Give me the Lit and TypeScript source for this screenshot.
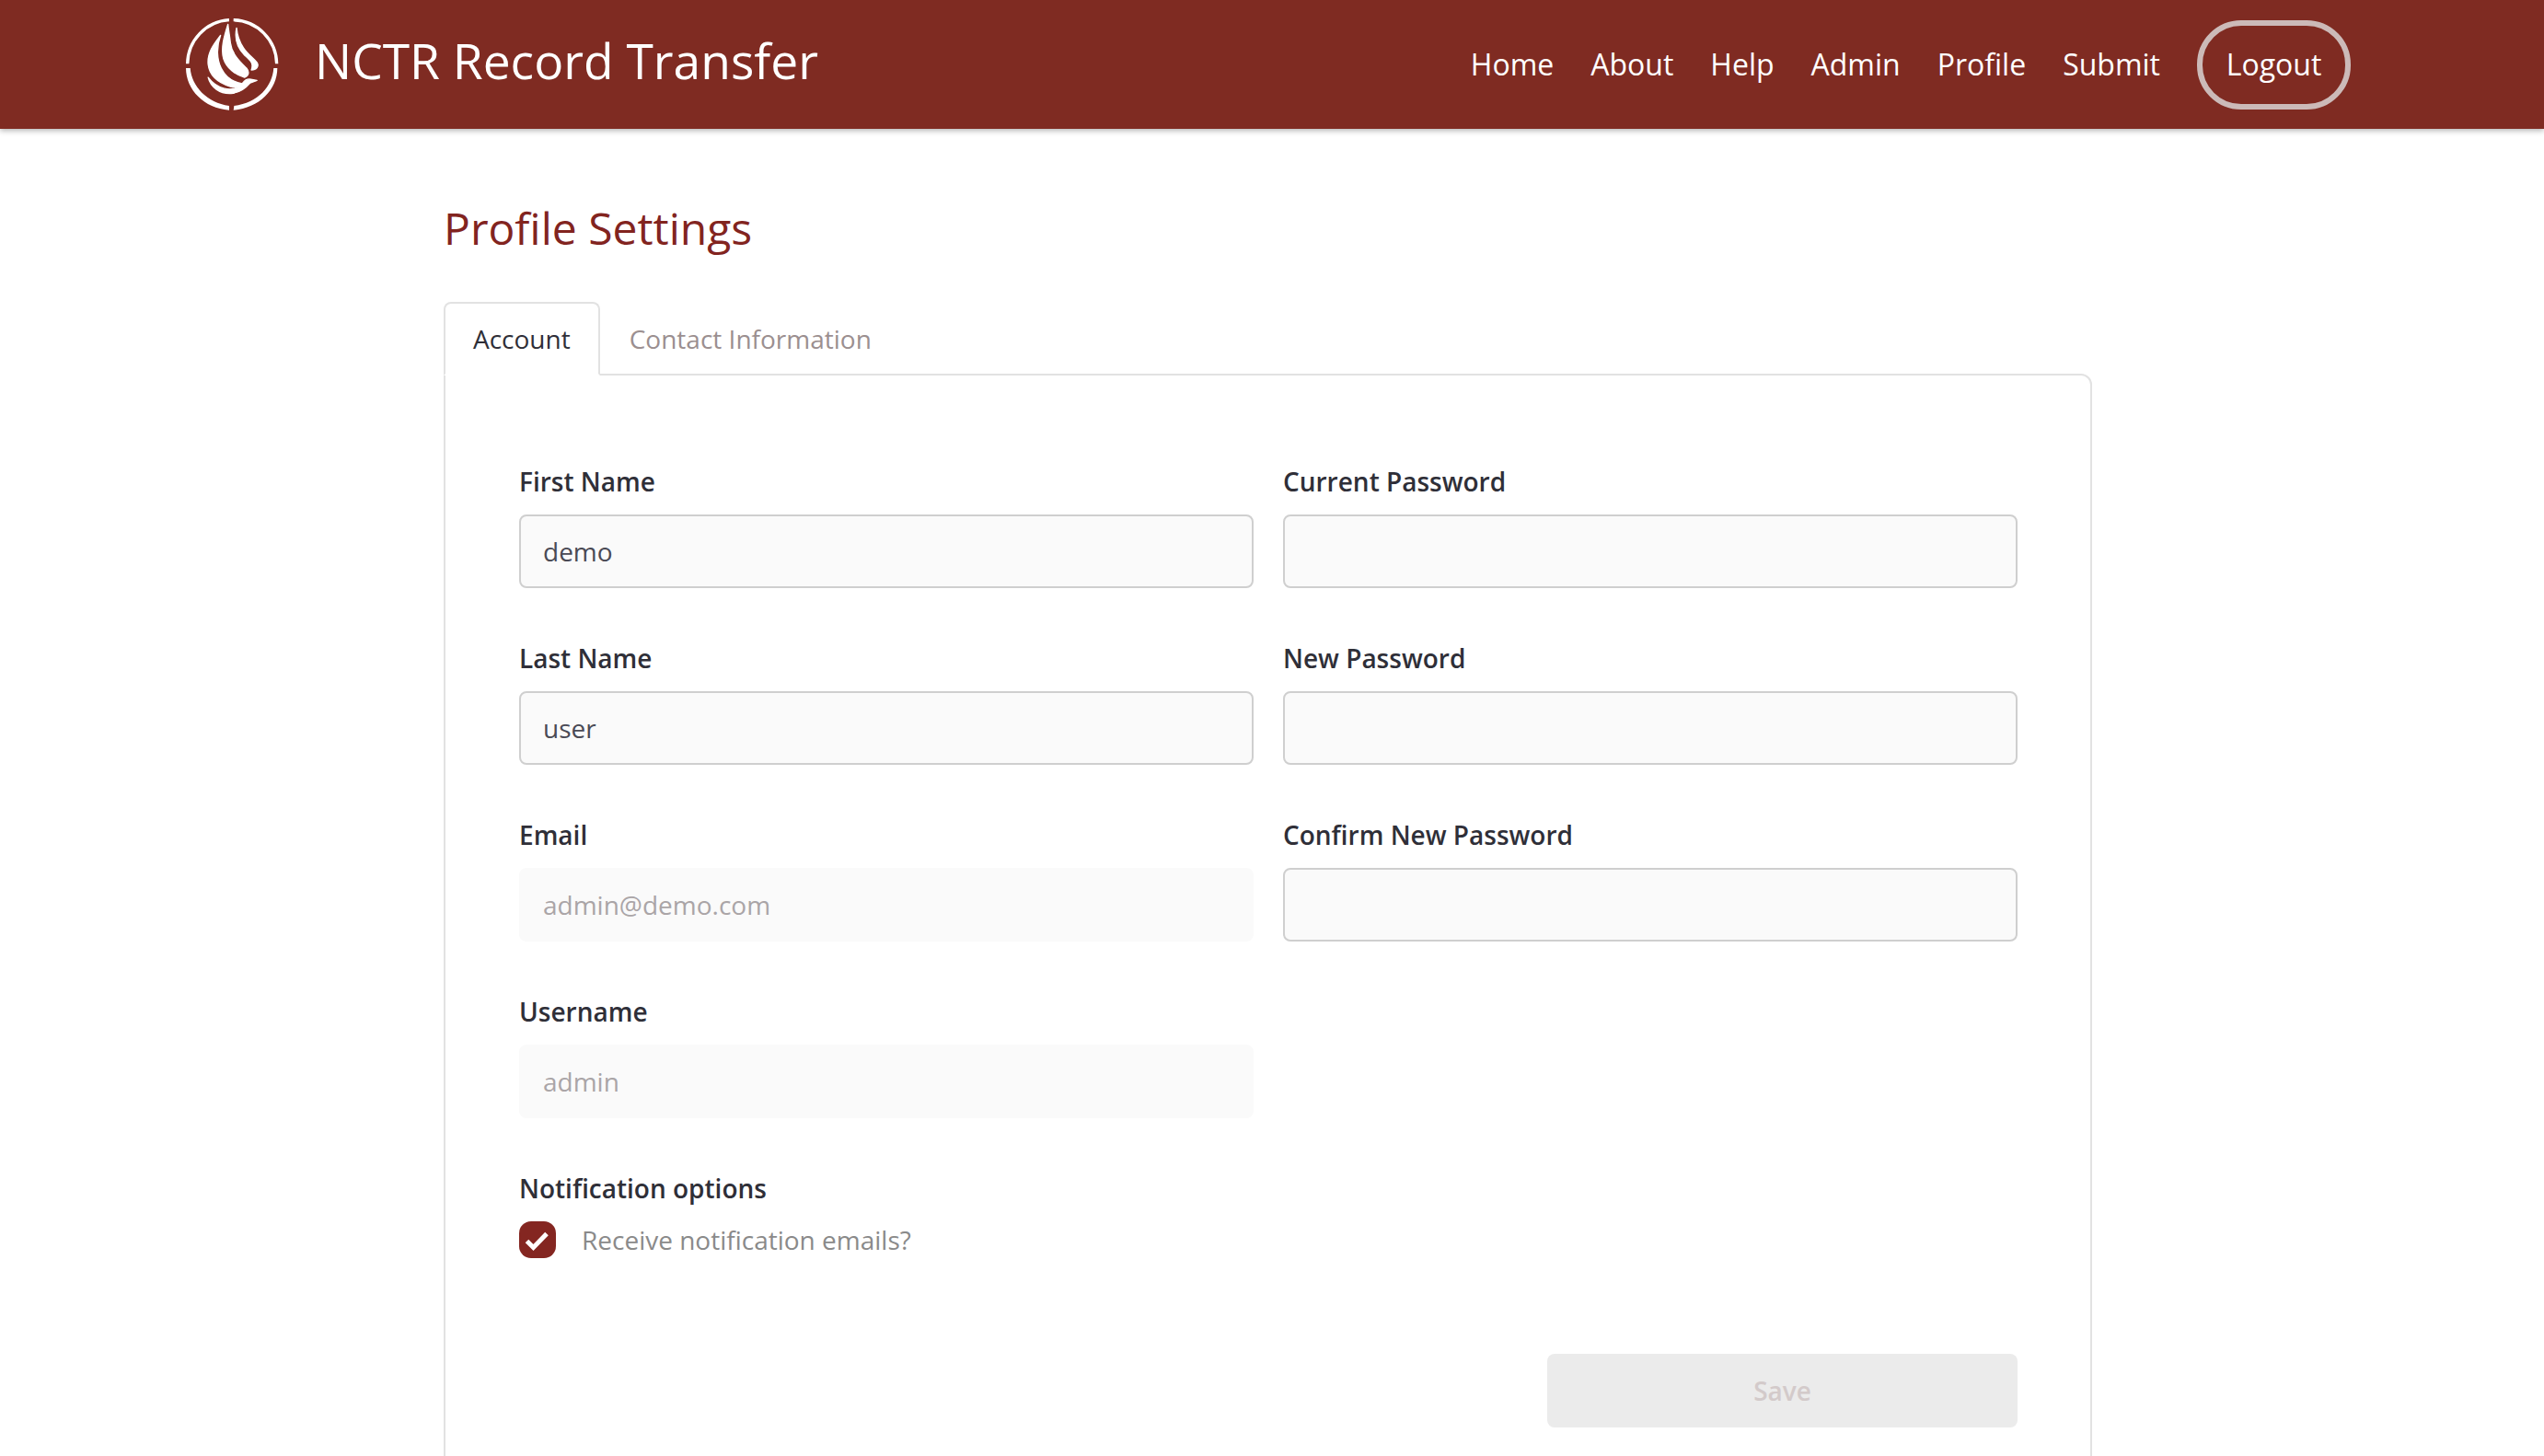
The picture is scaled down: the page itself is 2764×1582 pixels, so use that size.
import { LitElement, html, css, svg } from "lit";
import { customElement } from "lit/decorators.js";

const logoArt = svg`
  <g fill="none" stroke="#fff" stroke-width="10">
    <path d="M41 178 A144 144 0 0 1 176 36" />
    <path d="M190 36 A144 144 0 0 1 330 178" />
  </g>
  <path d="M36 192 L50 192 C54 250 105 305 176 314 L176 328 C95 322 36 262 36 192 Z" />
  <path d="M332 192 L320 192 C316 250 270 305 192 314 L190 328 C272 322 332 262 332 192 Z" />
  <g stroke="#fff" stroke-width="4" stroke-linejoin="round">
    <path d="M148 86 C128 112 104 142 108 180 C112 216 142 240 180 252 C198 256 212 252 224 244 C196 240 166 224 150 192 C136 164 134 124 148 86 Z" />
    <path d="M172 50 C160 88 148 128 158 162 C168 192 196 214 226 222 C240 216 242 204 232 192 C212 172 184 146 180 110 C178 90 174 70 172 50 Z" />
    <path d="M200 62 C192 100 206 130 226 150 C246 168 256 176 248 198 C264 198 274 186 266 174 C254 158 236 148 222 126 C210 108 202 86 200 62 Z" />
    <path d="M108 222 C116 254 146 276 182 274 C212 272 232 254 244 240 L266 232 L246 228 C236 226 226 232 220 240 C206 258 182 264 160 258 C138 252 120 238 108 222 Z" />
  </g>
`;

@customElement("app-root")
export class AppRoot extends LitElement {
  static styles = css`
    :host {
      display: block;
      height: 1582px;
      overflow: hidden;
      background: #fff;
      font-family: "Open Sans", "DejaVu Sans", sans-serif;
      color: #2f2f38;
    }
    .nav {
      height: 140px;
      background: #7f2b22;
      box-shadow: 0 2px 6px rgba(0, 0, 0, 0.3);
      display: flex;
      align-items: center;
      padding: 0 210px 0 200px;
      position: relative;
    }
    .logo { width: 104px; height: 104px; flex: none; }
    .title {
      margin-left: 38px;
      font-size: 53.3px;
      line-height: 1;
      color: #fff;
      flex: 1;
      padding-bottom: 8px;
    }
    .links { display: flex; align-items: center; gap: 40px; }
    .links a { color: #fff; font-size: 32px; text-decoration: none; padding-bottom: 2px; }
    .logout {
      box-sizing: border-box;
      height: 97px;
      width: 167px;
      padding-bottom: 2px;
      display: flex;
      align-items: center;
      justify-content: center;
      border: 6px solid #ccbab8;
      border-radius: 48px;
      color: #fff;
      font-size: 32px;
    }
    main { padding: 0 491px 0 482px; }
    h1 {
      margin: 0;
      padding-top: 74px;
      font-size: 48px;
      line-height: 68px;
      font-weight: 400;
      color: #82241f;
    }
    .tabs {
      display: flex;
      margin-top: 46px;
      position: relative;
      z-index: 1;
      margin-bottom: -2px;
    }
    .tab {
      box-sizing: border-box;
      height: 80px;
      padding: 0 30px;
      font-size: 28px;
      display: flex;
      align-items: center;
      border: 2px solid transparent;
      color: #9b8f90;
    }
    .tab.active {
      color: #2f2f38;
      background: #fff;
      border-color: #e2e2e2;
      border-bottom-color: #fff;
      border-radius: 8px 8px 0 0;
    }
    .card {
      box-sizing: border-box;
      border: 2px solid #e2e2e2;
      border-radius: 0 12px 0 0;
      padding: 94px 79px 0 80px;
      height: 1300px;
    }
    .cols { display: grid; grid-template-columns: 1fr 1fr; column-gap: 32px; }
    .col { display: flex; flex-direction: column; gap: 55px; }
    .field { display: flex; flex-direction: column; }
    label, .lbl {
      font-size: 28px;
      line-height: 42px;
      font-weight: 600;
      color: #2f2f38;
      margin-bottom: 15px;
    }
    .input {
      box-sizing: border-box;
      height: 80px;
      background: #fafafa;
      border: 2px solid #cfcfcf;
      border-radius: 8px;
      padding: 0 24px;
      display: flex;
      align-items: center;
      font-size: 28px;
      color: #4a4a55;
    }
    .input.disabled { border-color: #fafafa; color: #aaa5a7; }
    .check { display: flex; align-items: center; gap: 28px; font-size: 28px; color: #8a8a8a; height: 40px; }
    .check span { padding-bottom: 1px; }
    .box {
      width: 40px;
      height: 40px;
      border-radius: 13px;
      background: #842621;
      flex: none;
    }
    .box svg { display: block; }
    .actions { display: flex; justify-content: flex-end; margin-top: 104px; }
    .save {
      box-sizing: border-box;
      width: 511px;
      height: 80px;
      background: #ebebeb;
      border-radius: 8px;
      display: flex;
      align-items: center;
      justify-content: center;
      font-size: 28px;
      font-weight: 600;
      color: #d3caca;
    }
  `;

  field(label: string, value = "", disabled = false) {
    return html`<div class="field">
      <label>${label}</label>
      <div class="input ${disabled ? "disabled" : ""}">${value}</div>
    </div>`;
  }

  render() {
    return html`
      <header class="nav">
        <svg class="logo" viewBox="30 25 310 310" fill="#fff">${logoArt}</svg>
        <div class="title">NCTR Record Transfer</div>
        <nav class="links">
          <a>Home</a><a>About</a><a>Help</a><a>Admin</a><a>Profile</a><a>Submit</a>
          <div class="logout">Logout</div>
        </nav>
      </header>
      <main>
        <h1>Profile Settings</h1>
        <div class="tabs">
          <div class="tab active">Account</div>
          <div class="tab">Contact Information</div>
        </div>
        <section class="card">
          <div class="cols">
            <div class="col">
              ${this.field("First Name", "demo")}
              ${this.field("Last Name", "user")}
              ${this.field("Email", "admin@demo.com", true)}
              ${this.field("Username", "admin", true)}
              <div class="field">
                <div class="lbl">Notification options</div>
                <div class="check">
                  <div class="box">
                    <svg width="40" height="40" viewBox="0 0 40 40" fill="none" stroke="#fff" stroke-width="5">
                      <path d="M8.5 21.5 L15.5 28.5 L30 13.5" />
                    </svg>
                  </div>
                  <span>Receive notification emails?</span>
                </div>
              </div>
            </div>
            <div class="col">
              ${this.field("Current Password")}
              ${this.field("New Password")}
              ${this.field("Confirm New Password")}
            </div>
          </div>
          <div class="actions"><div class="save">Save</div></div>
        </section>
      </main>
    `;
  }
}
